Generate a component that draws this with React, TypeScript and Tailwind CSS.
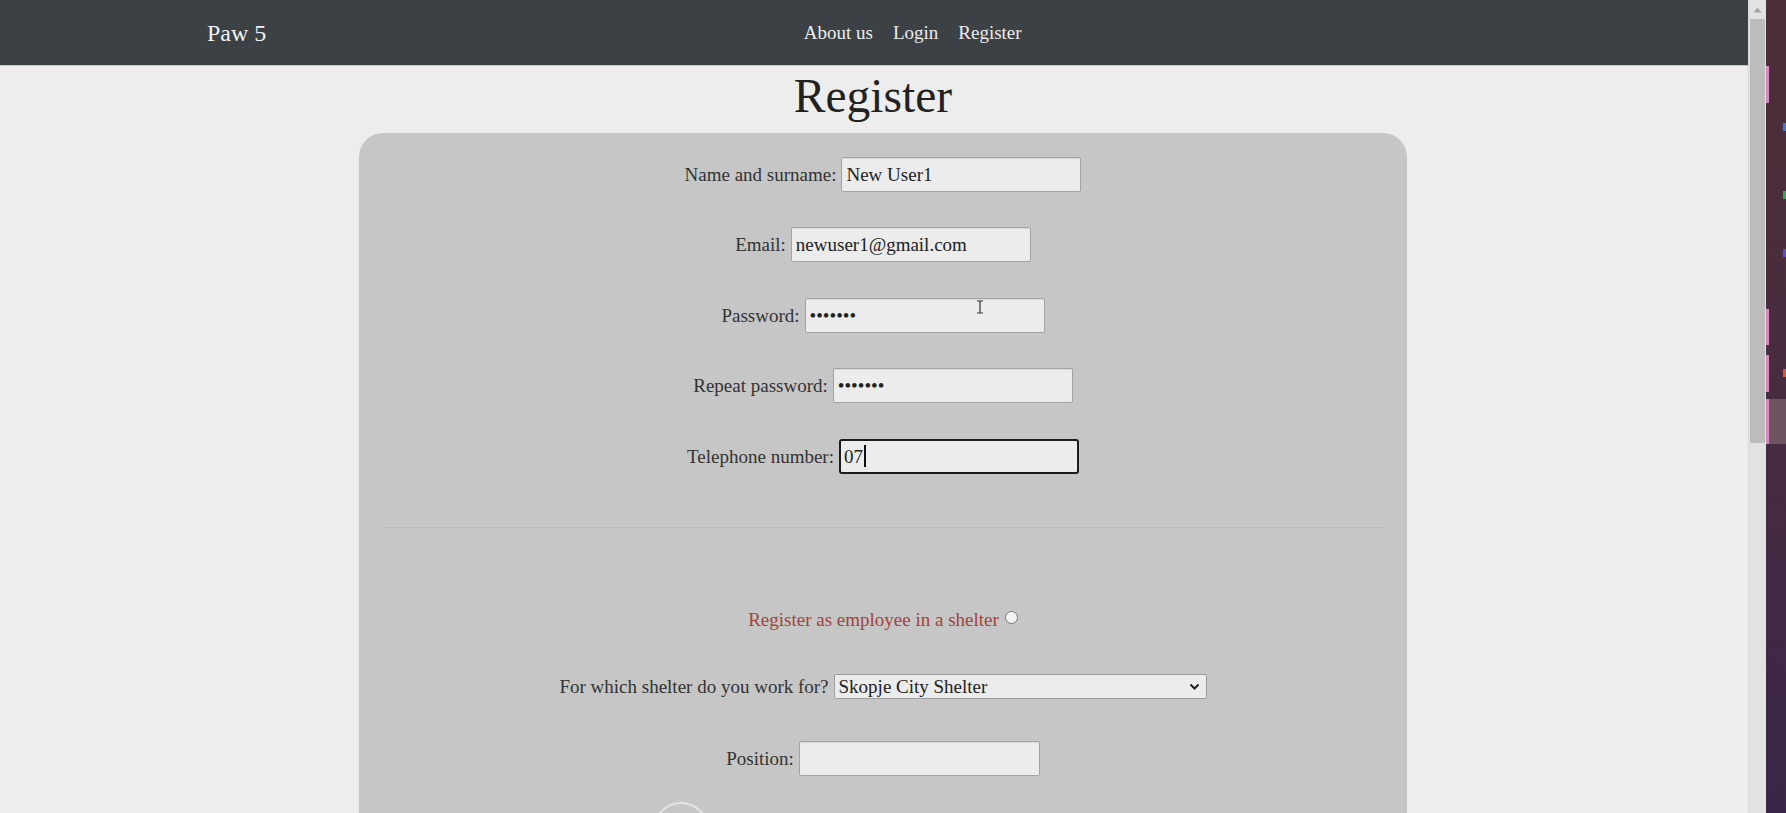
import React from "react";

const serif = "font-['Liberation_Serif','Times_New_Roman',serif]";

function Field({
  label,
  value,
  width = "w-[240px]",
  focused = false,
  ibeam = false,
  caret = false,
}: {
  label: string;
  value: string;
  width?: string;
  focused?: boolean;
  ibeam?: boolean;
  caret?: boolean;
}) {
  return (
    <div className="flex h-[35px] items-center justify-center">
      <label className="mr-[5px] text-[19px] leading-none text-[#333333]">{label}</label>
      <div
        role="textbox"
        className={`relative flex ${width} h-[35px] items-center bg-[#ececec] text-[19px] leading-none text-[#222] ${
          focused
            ? "rounded-[3px] border-2 border-[#1c1c1c] pl-[3px]"
            : "rounded-[2px] border border-[#a3a3a3] pl-[4px] shadow-[inset_0_1px_1px_rgba(0,0,0,0.08)]"
        }`}
      >
        <span className="whitespace-pre">{value}</span>
        {caret && <span className="ml-[1px] h-[22px] w-[2px] bg-[#111]" />}
        {ibeam && (
          <svg className="absolute left-[170px] top-[1px]" width="8" height="14" viewBox="0 0 8 14">
            <path d="M1 1h6M4 1v12M1 13h6" stroke="#333" strokeWidth="1.2" fill="none" />
          </svg>
        )}
      </div>
    </div>
  );
}

export default function App() {
  return (
    <div className={`${serif} flex h-[813px] w-[1786px] overflow-hidden bg-[#ededed]`}>
      {/* browser page */}
      <div className="flex w-[1748px] flex-col overflow-hidden">
        <nav className="flex h-[66px] shrink-0 items-center border-b border-[#c4c4c4] bg-[#3b4145] pl-[207px] pr-[195px]">
          <span className="text-[24px] leading-none text-[#f2f2f2]">Paw 5</span>
          <div className="ml-[6px] flex flex-1 justify-center gap-[20px] text-[19px] leading-none text-[#ececec]">
            <span>About us</span>
            <span>Login</span>
            <span>Register</span>
          </div>
        </nav>

        <h1 className="ml-[-2px] mt-[2px] text-center text-[47.5px] leading-[1.2] text-[#222]">Register</h1>

        <div className="ml-[359px] mt-[7.5px] w-[1048px] flex-1 rounded-t-[24px] bg-[#c6c6c6] px-[23px] pt-[24px]">
          <div className="flex flex-col gap-[35.6px]">
            <Field label="Name and surname:" value="New User1" />
            <Field label="Email:" value="newuser1@gmail.com" />
            <Field label="Password:" value="•••••••" ibeam />
            <Field label="Repeat password:" value="•••••••" />
            <Field label="Telephone number:" value="07" focused caret />
          </div>

          <div className="mt-[53.6px] border-t border-[#bababa]" />

          <div className="mt-[79px] flex h-[24px] items-center justify-center">
            <span className="text-[19px] leading-none text-[#a4433c]">Register as employee in a shelter</span>
            <span className="ml-[6px] mt-[-3px] h-[13px] w-[13px] rounded-full border border-[#7a7a7a] bg-[#f2f2f2]" />
          </div>

          <div className="mt-[43px] flex h-[24px] items-center justify-center">
            <span className="mr-[5px] text-[19px] leading-none text-[#333]">For which shelter do you work for?</span>
            <div
              role="combobox"
              className="relative flex h-[25px] w-[373px] items-center rounded-[2px] border border-[#9c9c9c] bg-[#ececec] pl-[4px] text-[19px] leading-none text-[#222]"
            >
              <span>Skopje City Shelter</span>
              <svg className="absolute right-[6px] top-[8px]" width="11" height="8" viewBox="0 0 11 8">
                <path d="M1.5 1.5l4 4 4-4" stroke="#222" strokeWidth="2" fill="none" />
              </svg>
            </div>
          </div>

          <div className="mt-[43px]">
            <Field label="Position:" value="" width="w-[241px]" />
          </div>

          <div className="mt-[25.5px] pl-[271px]">
            <div className="h-[56px] w-[56px] rounded-full border-2 border-[#e4e4e4]" />
          </div>
        </div>
      </div>

      {/* scrollbar */}
      <div className="flex w-[18px] shrink-0 flex-col border-l border-[#d8d8d8] bg-[#e2e2e2]">
        <div className="flex h-[19px] items-center justify-center">
          <svg width="9" height="6" viewBox="0 0 9 6">
            <path d="M0.5 5.5L4.5 0.5L8.5 5.5Z" fill="#a3a3a3" />
          </svg>
        </div>
        <div className="mx-[1px] h-[424px] bg-[#bcbcbc]" />
      </div>

      {/* desktop behind */}
      <div className="flex w-[20px] shrink-0 flex-col bg-gradient-to-b from-[#4e2f37] via-[#472c40] to-[#3a2648]">
        <div className="mt-[66px] h-[37px] w-[3px] bg-[#d58ac0]" />
        <div className="ml-[17px] mt-[20px] h-[8px] w-[3px] bg-[#4a78c8]" />
        <div className="ml-[17px] mt-[60px] h-[8px] w-[3px] bg-[#3fa05a]" />
        <div className="ml-[17px] mt-[50px] h-[8px] w-[3px] bg-[#5b4fd0]" />
        <div className="mt-[52px] h-[36px] w-[3px] bg-[#d58ac0]" />
        <div className="mt-[10px] flex h-[37px]">
          <div className="w-[3px] bg-[#d58ac0]" />
          <div className="ml-auto mt-[14px] h-[8px] w-[3px] bg-[#d25a3a]" />
        </div>
        <div className="mt-[7px] flex h-[45px] bg-[#6e5460]">
          <div className="w-[3px] bg-[#d58ac0]" />
        </div>
      </div>
    </div>
  );
}
